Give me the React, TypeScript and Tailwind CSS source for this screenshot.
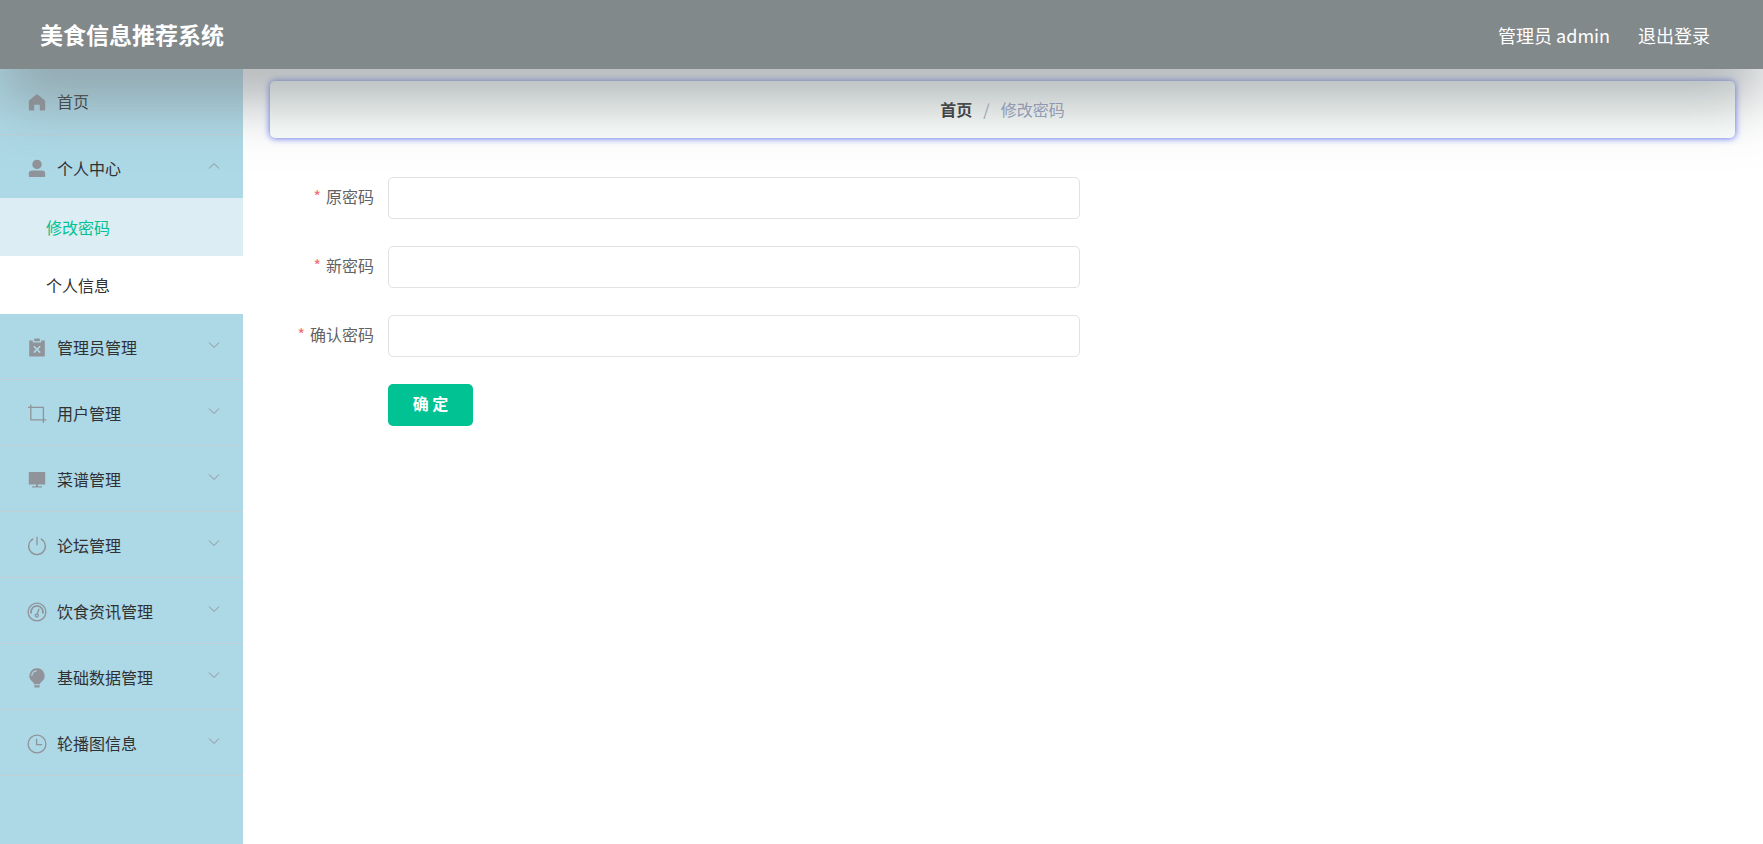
import { useState } from "react";
import type { ReactNode } from "react";

function Icon({ children }: { children: ReactNode }) {
  return (
    <svg viewBox="0 0 20 20" className="size-5 text-[#909399]" fill="none" stroke="currentColor" strokeWidth="1.3" aria-hidden="true">
      {children}
    </svg>
  );
}

const solid = { fill: "currentColor", stroke: "none" };

const icons = {
  home: (
    <Icon>
      <path {...solid} d="M10 2 2.600 8Q1.800 8.600 1.800 9.600v8q0 .8.8.8h4.600v-5.600h5.600v5.600h4.600q.8 0 .8-.8v-8q0-1-.8-1.600z" />
    </Icon>
  ),
  user: (
    <Icon>
      <circle {...solid} cx="10" cy="5.400" r="4.700" />
      <path {...solid} d="M1.800 17.200v-2.400q0-3.200 3.200-3.200h10q3.200 0 3.200 3.200v2.400q0 .8-.8.8H2.600q-.8 0-.8-.8z" />
    </Icon>
  ),
  clipboard: (
    <Icon>
      <path {...solid} d="M7.200.6h5.600v2.600H7.200z" />
      <path {...solid} d="M2.200 2.400h3.600v2.200h8.400V2.400h3.600v16.200H2.200z" />
      <path stroke="#add8e6" strokeWidth="1.600" d="m6.800 8.200 6.400 6.400m0-6.400-6.400 6.400" />
    </Icon>
  ),
  crop: (
    <Icon>
      <path d="M1 3.400h15.400V19M3.800.8v15h15.400" />
    </Icon>
  ),
  monitor: (
    <Icon>
      <path {...solid} d="M2.600 2h14.800q.8 0 .8.800v11.600H1.800V2.800q0-.8.8-.8zM9 14.400h2v1.800h4v1.200H5v-1.200h4z" />
    </Icon>
  ),
  power: (
    <Icon>
      <path d="M10 .8v8.400M6.200 2.900a8.300 8.300 0 1 0 7.600 0" />
    </Icon>
  ),
  gauge: (
    <Icon>
      <circle cx="10" cy="10" r="8.900" />
      <path strokeWidth="1.700" d="M4.200 11.500A6 6 0 1 1 15.800 11.500" />
      <path d="M12 6.800 10.300 12" />
      <circle cx="9.800" cy="13.600" r="1.500" />
    </Icon>
  ),
  bulb: (
    <Icon>
      <path {...solid} d="M10 .200a7.500 7.500 0 0 0-4.800 13.300q1.600 1.400 1.900 2.700h5.800q.3-1.300 1.900-2.700A7.500 7.500 0 0 0 10 .200zM7.300 17.200h5.400v1.200q0 1.200-1.200 1.200h-3q-1.200 0-1.200-1.200z" />
      <path stroke="#add8e6" strokeWidth="1.200" d="M4.800 8A5.200 5.200 0 0 1 9.600 2.800" />
    </Icon>
  ),
  clock: (
    <Icon>
      <circle cx="10" cy="10" r="8.900" />
      <path d="M9.600 4.800v5.800H15" />
    </Icon>
  ),
};

const groups = [
  { label: "管理员管理", icon: icons.clipboard },
  { label: "用户管理", icon: icons.crop },
  { label: "菜谱管理", icon: icons.monitor },
  { label: "论坛管理", icon: icons.power },
  { label: "饮食资讯管理", icon: icons.gauge },
  { label: "基础数据管理", icon: icons.bulb },
  { label: "轮播图信息", icon: icons.clock },
];

const fields = [
  { id: "old-password", label: "原密码" },
  { id: "new-password", label: "新密码" },
  { id: "confirm-password", label: "确认密码" },
];

function Chevron({ open }: { open: boolean }) {
  return (
    <svg viewBox="0 0 12 12" className="mb-1.5 ml-auto size-3 text-[#909399]" fill="none" stroke="currentColor" aria-hidden="true">
      <path d={open ? "M1 8.500 6 3.500l5 5" : "M1 3.500l5 5 5-5"} />
    </svg>
  );
}

function GroupTitle({ label, icon, open, onClick }: { label: string; icon: ReactNode; open: boolean; onClick?: () => void }) {
  return (
    <button type="button" aria-expanded={open} onClick={onClick} className="flex h-[59px] w-full cursor-pointer items-center pr-[23px] pl-[27px]">
      {icon}
      <span className="ml-[10px] pb-0.5">{label}</span>
      <Chevron open={open} />
    </button>
  );
}

export default function App() {
  const [open, setOpen] = useState(true);
  return (
    <div className="flex min-h-screen flex-col bg-white font-['Noto_Sans_CJK_SC',sans-serif] text-base text-[#303133]">
      <header className="relative z-10 flex h-[69px] items-center justify-between bg-[#82898b] pr-[53px] pl-10 text-white shadow-[0_30px_60px_rgba(130,137,139,0.7)]">
        <h1 className="text-[23px] font-bold">美食信息推荐系统</h1>
        <div className="flex items-center gap-7 text-lg">
          <span>管理员 admin</span>
          <a href="#logout">退出登录</a>
        </div>
      </header>
      <div className="flex flex-1">
        <aside className="w-[243px] shrink-0 bg-[#add8e6]">
          <nav>
            <ul>
              <li className="border-b border-[#c0cfd4]">
                <a href="#home" className="flex h-[65px] items-center pl-[27px]">
                  {icons.home}
                  <span className="ml-[10px] pb-0.5">首页</span>
                </a>
              </li>
              <li className="pt-1">
                <GroupTitle label="个人中心" icon={icons.user} open={open} onClick={() => setOpen(!open)} />
                {open && (
                  <ul>
                    <li>
                      <a href="#password" aria-current="page" className="flex h-[58px] items-center bg-[#dcedf3] pl-[46px] text-[#00c292]">修改密码</a>
                    </li>
                    <li>
                      <a href="#profile" className="flex h-[58px] items-center bg-white pl-[46px]">个人信息</a>
                    </li>
                  </ul>
                )}
              </li>
              {groups.map((group) => (
                <li key={group.label} className="border-b border-[#c0cfd4] pt-1 pb-0.5">
                  <GroupTitle label={group.label} icon={group.icon} open={false} />
                </li>
              ))}
            </ul>
          </nav>
        </aside>
        <main className="min-w-0 flex-1 pt-3 pr-7 pl-[27px]">
          <nav aria-label="面包屑" className="flex h-[57px] items-center justify-center gap-[11px] rounded-[5px] bg-[#fcfffd] pb-0.5 shadow-[0_0_7px_#4c60f0]">
            <a href="#home" className="font-bold">首页</a>
            <span className="text-[#a3a9b5]">/</span>
            <span className="text-[#97a0be]">修改密码</span>
          </nav>
          <form className="mt-[39px] flex max-w-[810px] flex-col gap-[27px]" onSubmit={(event) => event.preventDefault()}>
            {fields.map((field) => (
              <div key={field.id} className="flex items-center gap-[14px]">
                <label htmlFor={field.id} className="w-[104px] shrink-0 pb-[5px] text-right text-[#606266]">
                  <span className="mr-[5px] text-[#f56c6c]">*</span>
                  {field.label}
                </label>
                <input id={field.id} type="password" className="h-[42px] min-w-0 flex-1 rounded-[5px] border border-[#e0e2e6] bg-white px-4 outline-none" />
              </div>
            ))}
            <button type="submit" className="ml-[118px] h-[42px] w-[85px] cursor-pointer rounded-[5px] bg-[#00c292] pb-[5px] font-bold text-white">
              确 定
            </button>
          </form>
        </main>
      </div>
    </div>
  );
}
